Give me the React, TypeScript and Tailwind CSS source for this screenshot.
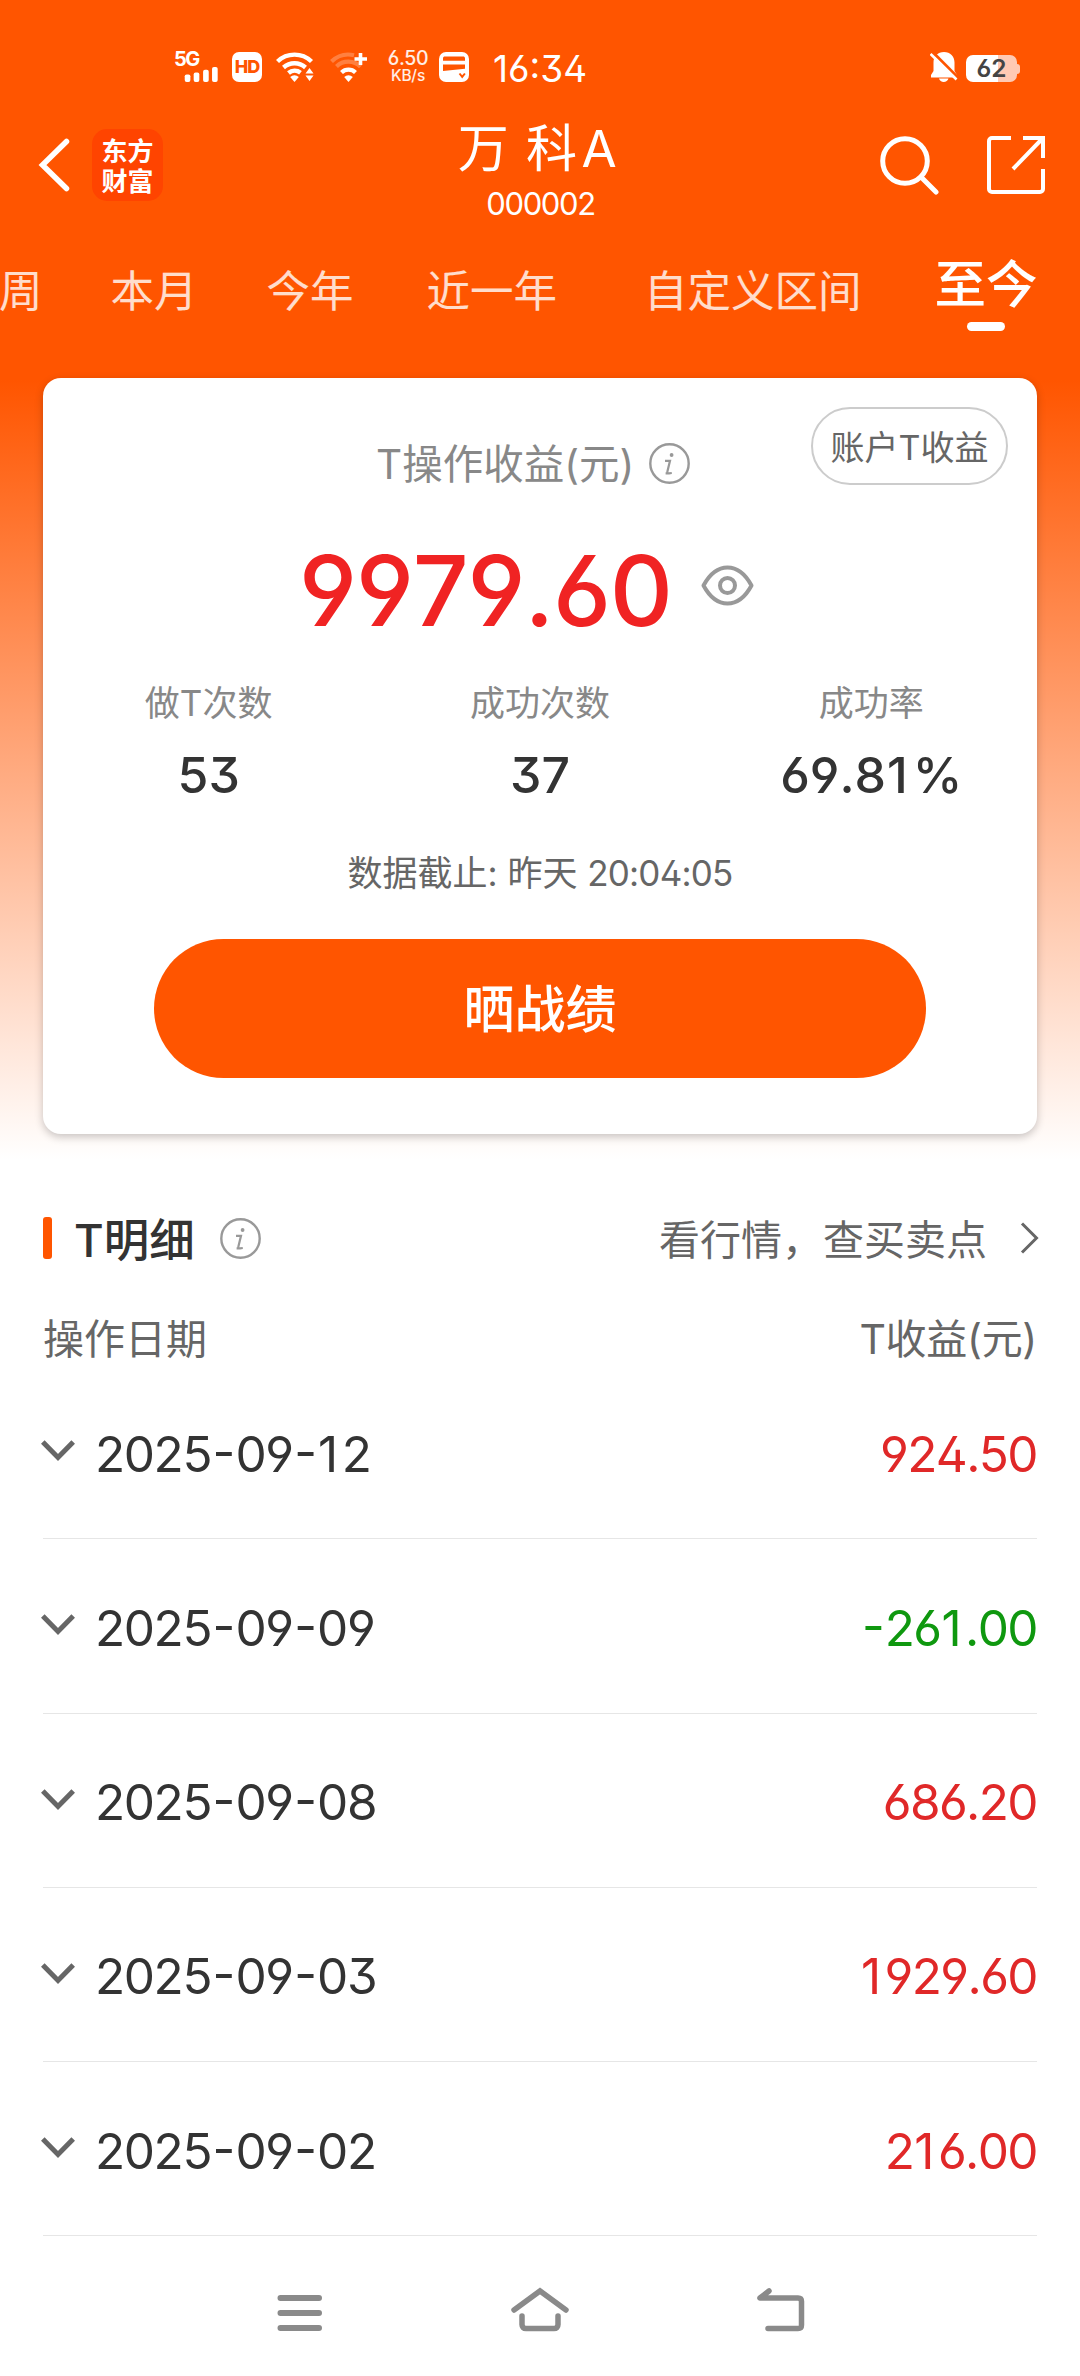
type Tab = { label: string; className: string }

const TABS: Tab[] = [
  { label: '周', className: '-ml-[1px]' },
  { label: '本月', className: 'ml-[68px]' },
  { label: '今年', className: 'ml-[69px]' },
  { label: '近一年', className: 'ml-[73px]' },
  { label: '自定义区间', className: 'ml-[87px]' },
]

const STATS = [
  { label: '做T次数', value: '53' },
  { label: '成功次数', value: '37' },
  { label: '成功率', value: '69.81%' },
]

const ROWS = [
  { date: '2025-09-12', profit: '924.50' },
  { date: '2025-09-09', profit: '-261.00' },
  { date: '2025-09-08', profit: '686.20' },
  { date: '2025-09-03', profit: '1929.60' },
  { date: '2025-09-02', profit: '216.00' },
]

// "1" and "-" are narrower than the other figures, so give them a little room
const Figures = ({ text }: { text: string }) => (
  <>
    {text.split(/([1-])/).map((part, i) => {
      if (part === '1') return <span key={i} className="ml-[1px] mr-[5px]">1</span>
      if (part === '-') return <span key={i} className="mx-[1.5px]">-</span>
      return part
    })}
  </>
)

const InfoIcon = () => (
  <svg className="w-[41px] h-[41px] shrink-0" viewBox="0 0 41 41" fill="none" stroke="#999">
    <circle cx="20.5" cy="20.5" r="19.2" strokeWidth="2.4" />
    <circle cx="22.6" cy="12" r="1.9" fill="#999" stroke="none" />
    <path d="M16 17.8h5l-2.6 10.6c-.3 1.4.4 2 1.6 1.9l2.8-.3M16.6 30.3h3" strokeWidth="2.2" />
  </svg>
)

function StatusBar() {
  return (
    <div className="h-[82px] flex items-end justify-between pl-[174px] pr-[60px] text-white">
      <div className="flex items-end">
        <div className="w-[45px] h-[30px] flex flex-col">
          <span className="h-[15px] text-[20px] leading-[15px] font-bold tracking-[-1.5px]">5G</span>
          <svg className="w-[45px] h-[17px] -mt-[1px]" viewBox="0 0 45 17" fill="currentColor">
            <rect x="10" y="9" width="6" height="8" rx="2" />
            <rect x="19.5" y="7" width="6" height="10" rx="2" />
            <rect x="29.5" y="4" width="6" height="13" rx="2" />
            <rect x="39" y="1" width="6" height="16" rx="2" />
          </svg>
        </div>
        <div className="ml-[13px] w-[30px] h-[30px] rounded-[7px] bg-white flex items-center justify-center">
          <span className="text-[18px] leading-none font-extrabold tracking-[-1px] text-[#ff5500]">HD</span>
        </div>
        <svg className="ml-[14px] w-[39px] h-[30px]" viewBox="0 0 39 30" fill="none" stroke="currentColor" strokeWidth="4.4">
          <path d="M1.5 9.5a24.5 24.5 0 0 1 34 0" />
          <path d="M7.5 15.5a16.5 16.5 0 0 1 22 0" />
          <path d="M12.5 21a9.5 9.5 0 0 1 12-.3" />
          <path d="M14.2 25a6.5 6.5 0 0 1 8.6 0l-4.3 5z" fill="currentColor" stroke="none" />
          <path d="M33.5 16l4 5.5h-8zM33.5 29l4-5.5h-8z" fill="currentColor" stroke="none" />
        </svg>
        <svg className="ml-[15px] w-[39px] h-[30px]" viewBox="0 0 39 30" fill="none" stroke="currentColor" strokeWidth="4.2">
          <g opacity=".25">
            <path d="M1.5 9.5a24.5 24.5 0 0 1 22.5-6.3" />
            <path d="M6.5 14.5a17 17 0 0 1 24 .3" />
          </g>
          <path d="M11.5 20.5a10 10 0 0 1 14 0" />
          <path d="M14.2 25a6.5 6.5 0 0 1 8.6 0l-4.3 5z" fill="currentColor" stroke="none" />
          <path d="M30.5 1v12M24.5 7h12.5" strokeWidth="3.6" />
        </svg>
        <div className="ml-[19px] w-[40px] h-[32px] flex flex-col items-center text-white/90">
          <span className="h-4 text-[19.5px] leading-4 font-medium tracking-[-0.4px]">6.50</span>
          <span className="h-4 mt-[2px] text-[15.5px] leading-4 font-medium tracking-[-0.2px]">KB/s</span>
        </div>
        <svg className="ml-[11px] w-[30px] h-[30px]" viewBox="0 0 30 30">
          <rect width="30" height="30" rx="7" fill="#fff" />
          <path d="M4 6.2c0-1 .8-1.7 1.8-1.7h18.4c1 0 1.8.7 1.8 1.7v2.6H4zM4 12.5h22v4.3L4 19z" fill="#ff5500" />
          <path d="M20.5 21.5l2.7 3.4 2.7-3.4" fill="none" stroke="#ff5500" strokeWidth="2" />
        </svg>
        <span className="ml-[24px] -mb-[1px] h-[28px] text-[37px] leading-[28px]">16:34</span>
      </div>
      <div className="flex items-end">
        <svg className="w-[28px] h-[30px] mr-2" viewBox="0 0 28 30">
          <path d="M14 0c6.3 0 10.5 4.3 10.5 10.5V19l2.5 4v2.5H1V23l2.5-4v-8.5C3.5 4.3 7.7 0 14 0zM9 26.5h9.5C17.8 28.7 16 30 13.7 30S9.7 28.7 9 26.5z" fill="#fff" />
          <path d="M2.5 0L28 25.5" stroke="#ff5500" strokeWidth="3" />
          <path d="M.6 2l25.9 25.5" stroke="#fff" strokeWidth="2.6" />
        </svg>
        <div className="w-[51px] h-[27px] rounded-[7px] bg-gradient-to-r from-white from-63% to-[#ffc9b3] to-63% flex items-center justify-center">
          <span className="text-[24.5px] leading-none font-semibold text-[#444]">62</span>
        </div>
        <span className="w-[3px] h-[10px] mb-[8px] rounded-r-[3px] bg-[#ffc9b3]" />
      </div>
    </div>
  )
}

function TitleBar() {
  return (
    <div className="mt-[37px] h-[96px] grid grid-cols-3 text-white">
      <div className="h-[92px] flex items-center pl-[38px]">
        <svg className="w-[32px] h-[54px]" viewBox="0 0 32 54" fill="none" stroke="currentColor" strokeWidth="5.5" strokeLinecap="round">
          <path d="M28.5 3.5L4.5 27l24 23.5" />
        </svg>
        <div className="ml-[22px] w-[71px] h-[72px] rounded-[15px] bg-[#ff4400] flex flex-col items-center justify-center text-[26px] leading-[30px] font-bold font-['Noto_Sans_CJK_SC',sans-serif]">
          <span className="h-[30px]">东方</span>
          <span className="h-[30px]">财富</span>
        </div>
      </div>
      <div className="flex flex-col items-center">
        <div className="h-[60px] -ml-1 text-[51px] leading-[60px] whitespace-pre tracking-[1.5px]">
          万 科<span className="ml-[3px]">A</span>
        </div>
        <div className="mt-[9px] ml-[1px] h-[32px] text-[31px] leading-[32px] tracking-[-1.4px]">000002</div>
      </div>
      <div className="h-[92px] flex items-center justify-end pr-[35px] gap-[48px]">
        <svg className="w-[59px] h-[59px]" viewBox="0 0 59 59" fill="none" stroke="currentColor" strokeWidth="5" strokeLinecap="round">
          <circle cx="25" cy="25" r="22.3" />
          <path d="M41.5 41.5L56 56" />
        </svg>
        <svg className="w-[58px] h-[58px]" viewBox="0 0 58 58" fill="none" stroke="currentColor" strokeWidth="4">
          <path d="M24 2H5a3 3 0 0 0-3 3v48a3 3 0 0 0 3 3h48a3 3 0 0 0 3-3V33M36 2h20v20M55 3L26 33" />
        </svg>
      </div>
    </div>
  )
}

function Tabs() {
  return (
    <div className="h-[163px] pt-[46px] flex items-start whitespace-nowrap text-white">
      {TABS.map((t) => (
        <span key={t.label} className={`h-[60px] shrink-0 text-[43.5px] leading-[60px] text-white/80 ${t.className}`}>
          {t.label}
        </span>
      ))}
      <div className="ml-[73px] shrink-0 flex flex-col items-center">
        <span className="h-[60px] -mt-[7px] text-[51.5px] leading-[60px] font-medium">至今</span>
        <span className="mt-[8px] w-[38px] h-[9px] rounded-full bg-white" />
      </div>
    </div>
  )
}

function SummaryCard() {
  return (
    <section className="mx-[43px] h-[756px] rounded-[18px] bg-white flex flex-col items-center shadow-[0_3px_8px_rgba(0,0,0,0.22)]">
      <div className="w-full h-[124px] pt-[29px] flex items-start justify-between">
        <div className="mt-[28px] ml-[333px] flex items-center">
          <h2 className="h-[60px] text-[40.5px] leading-[60px] text-[#888]">T操作收益(元)</h2>
          <span className="ml-[15px] -mt-[3px]"><InfoIcon /></span>
        </div>
        <button className="mr-[29px] w-[197px] h-[78px] pt-[2px] rounded-full border-2 border-[#ccc] text-[34px] leading-[74px] text-[#666]">
          账户T收益
        </button>
      </div>

      <div className="mt-[39px] h-[100px] w-full pl-[256px] flex items-center">
        <span className="text-[98px] leading-[100px] font-medium tracking-[-1.2px] text-[#f02323] [font-kerning:none]">9979.60</span>
        <svg className="ml-auto mr-[283px] -mt-[12px] w-[53px] h-[41px]" viewBox="0 0 53 41" fill="none" stroke="#999" strokeWidth="4">
          <path d="M2.5 20.5C9 8.5 17 2.5 26.5 2.5S44 8.5 50.5 20.5C44 32.5 36 38.5 26.5 38.5S9 32.5 2.5 20.5z" strokeLinejoin="round" />
          <circle cx="26.5" cy="20.5" r="7.5" />
        </svg>
      </div>

      <div className="mt-[32px] w-full grid grid-cols-3 text-center">
        {STATS.map((s) => (
          <div key={s.label}>
            <div className="h-[60px] text-[35px] leading-[60px] text-[#888]">{s.label}</div>
            <div className="mt-[12px] h-[60px] text-[50px] leading-[60px] font-medium text-[#333] [font-kerning:none]">
              <Figures text={s.value} />
            </div>
          </div>
        ))}
      </div>

      <p className="mt-[38px] h-[60px] text-[35px] leading-[60px] text-[#666]">
        数据截止: 昨天 <span className="tracking-[-0.8px]">20:04:05</span>
      </p>

      <button className="mt-[36px] w-[772px] h-[139px] pt-[3px] rounded-full bg-[#ff5500] text-[51px] font-medium text-white">
        晒战绩
      </button>
    </section>
  )
}

function Detail() {
  return (
    <section className="px-[43px]">
      <div className="mt-[74px] h-[60px] flex items-center">
        <span className="w-[9px] h-[42px] rounded-[3px] bg-[#ff5500]" />
        <h3 className="ml-[22px] mt-[5px] text-[45.5px] leading-[60px] font-medium text-[#333]">T明细</h3>
        <span className="ml-[25px]"><InfoIcon /></span>
        <span className="ml-auto mt-[3px] text-[41px] leading-[60px] text-[#666]">看行情，查买卖点</span>
        <svg className="ml-[33px] -mr-[2px] w-[19px] h-[32px]" viewBox="0 0 19 32" fill="none" stroke="#666" strokeWidth="3">
          <path d="M2 1.5L16.5 16 2 30.5" />
        </svg>
      </div>

      <div className="mt-[41px] h-[60px] flex justify-between text-[41px] leading-[60px] text-[#666]">
        <span>操作日期</span>
        <span className="tracking-[-0.3px]">T收益(元)</span>
      </div>

      <ul className="-mt-[4px]">
        {ROWS.map((r) => (
          <li
            key={r.date}
            className="h-[174.25px] pt-[4px] flex items-center border-b border-[#e6e6e6] text-[49.5px] leading-[60px] tracking-[-1.4px] [font-kerning:none] [font-feature-settings:'ss01','case']"
          >
            <svg className="-ml-[2px] -mt-[5px] w-[34px] h-[22px]" viewBox="0 0 34 22" fill="none" stroke="#666" strokeWidth="5">
              <path d="M1.8 2L17 17.5 32.2 2" />
            </svg>
            <span className="ml-[20px] text-[#333]"><Figures text={r.date} /></span>
            <span className={`ml-auto tracking-[-1.6px] ${r.profit.startsWith('-') ? 'text-[#0f980f]' : 'text-[#e02828]'}`}>
              <Figures text={r.profit} />
            </span>
          </li>
        ))}
      </ul>
    </section>
  )
}

function NavBar() {
  return (
    <nav className="mt-[50px] h-[46px] pl-[277px] flex items-end text-[#8a8a8a]">
      <svg className="w-[46px] h-[38px]" viewBox="0 0 46 38" stroke="currentColor" strokeWidth="6" strokeLinecap="round">
        <path d="M3.5 4H42M3.5 19H42M3.5 34H42" />
      </svg>
      <svg className="ml-[188px] w-[58px] h-[45px]" viewBox="0 0 58 45" fill="none" stroke="currentColor" strokeWidth="5.5" strokeLinecap="round">
        <path d="M3 23L29 4l26 19" />
        <path d="M11 29v8.5c0 2.5 1.5 4 4 4h28c2.5 0 4-1.5 4-4V29" />
      </svg>
      <svg className="ml-[187px] w-[49px] h-[44px]" viewBox="0 0 49 44" fill="none" stroke="currentColor" strokeWidth="5.5" strokeLinecap="round" strokeLinejoin="round">
        <path d="M13 3L4 10h38c2.5 0 3.5 1.5 3.5 3.5V37c0 2.5-1 3.5-3.5 3.5H12" />
      </svg>
    </nav>
  )
}

export default function App() {
  return (
    <div className="w-[1080px] h-[2376px] overflow-hidden bg-[linear-gradient(#ff5500_380px,#ffffff_1160px)] font-[Inter,'Noto_Sans_CJK_SC',sans-serif] [font-feature-settings:'ss01']">
      <StatusBar />
      <TitleBar />
      <Tabs />
      <SummaryCard />
      <Detail />
      <NavBar />
    </div>
  )
}
